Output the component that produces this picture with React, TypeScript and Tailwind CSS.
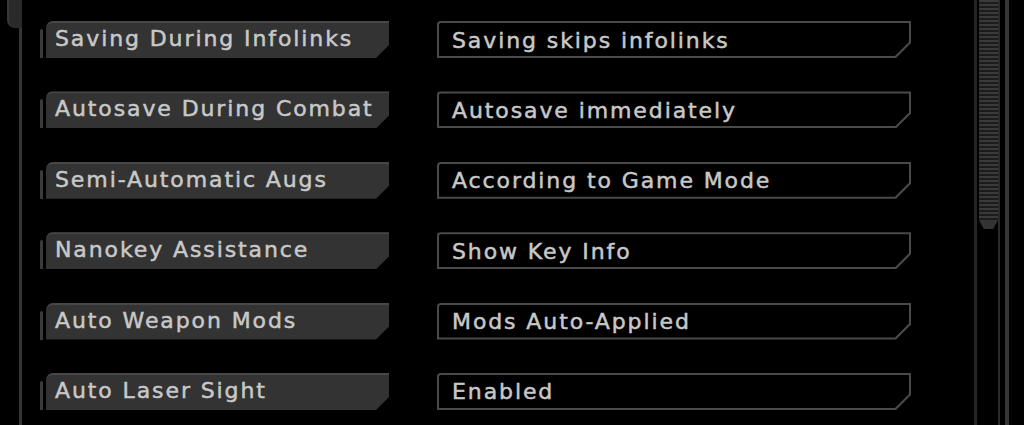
import React from "react";

const rows: [string, string][] = [
  ["Saving During Infolinks", "Saving skips infolinks"],
  ["Autosave During Combat", "Autosave immediately"],
  ["Semi-Automatic Augs", "According to Game Mode"],
  ["Nanokey Assistance", "Show Key Info"],
  ["Auto Weapon Mods", "Mods Auto-Applied"],
  ["Auto Laser Sight", "Enabled"],
];

const font = { fontFamily: '"DejaVu Sans", "Liberation Sans", sans-serif' };

function Row({ label, value }: { label: string; value: string }) {
  return (
    <div className="flex items-end h-[37px]">
      <div className="w-[3px] h-[29px] bg-[#3a3a3a] rounded-t-[2px]" />
      <div className="ml-[3px] w-[343px] h-[37px] bg-[#333333] border-t-2 border-[#484848] rounded-tl-[7px] [clip-path:polygon(0_0,100%_0,100%_calc(100%_-_13px),calc(100%_-_13px)_100%,0_100%)] flex items-center pl-[9px]">
        <span className="text-[22px] leading-none tracking-[1.9px] text-[#c8c8c8] [-webkit-text-stroke:0.5px_#c8c8c8] -mt-[3px] whitespace-nowrap" style={font}>
          {label}
        </span>
      </div>
      <div className="ml-[48px] w-[474px] h-[37px] bg-[#4a4a4a] rounded-tl-[4px] p-[2px] [clip-path:polygon(0_0,100%_0,100%_calc(100%_-_15px),calc(100%_-_15px)_100%,0_100%)]">
        <div className="w-full h-full bg-black rounded-tl-[2px] [clip-path:polygon(0_0,100%_0,100%_calc(100%_-_14px),calc(100%_-_14px)_100%,0_100%)] flex items-center pl-[13px]">
          <span className="text-[22px] leading-none tracking-[1.9px] text-[#c8c8c8] [-webkit-text-stroke:0.5px_#c8c8c8] mt-[2px] whitespace-nowrap" style={font}>
            {value}
          </span>
        </div>
      </div>
    </div>
  );
}

export default function App() {
  return (
    <div className="w-[1024px] h-[425px] bg-black overflow-hidden flex">
      {/* left decoration */}
      <div className="w-[40px] h-full flex flex-col pl-[7px]">
        <div className="w-[15px] h-[28px] bg-[#2a2a2a] border-l-2 border-[#383838] rounded-bl-[8px]" />
        <div className="ml-[12px] w-[3px] flex-1 bg-[#353535]" />
      </div>
      {/* rows */}
      <div className="pt-[21px] flex flex-col gap-[33.4px]">
        {rows.map(([l, v]) => (
          <Row key={l} label={l} value={v} />
        ))}
      </div>
      {/* scrollbar */}
      <div className="ml-[63px] h-full flex">
        <div className="w-[3px] h-full bg-[#252525]" />
        <div className="ml-[2px] w-[19px] flex flex-col">
          <div className="h-[220px] bg-[repeating-linear-gradient(to_bottom,#3a3a3a_0px,#3a3a3a_2px,#1c1c1c_2px,#1c1c1c_4px)]" />
          <div className="h-[9px] bg-[#333333] [clip-path:polygon(0_0,100%_0,75%_100%,25%_100%)]" />
        </div>
        <div className="w-[2px] h-full bg-[#2a2a2a]" />
        <div className="ml-[5px] w-[4px] h-full bg-[#363636]" />
      </div>
    </div>
  );
}
